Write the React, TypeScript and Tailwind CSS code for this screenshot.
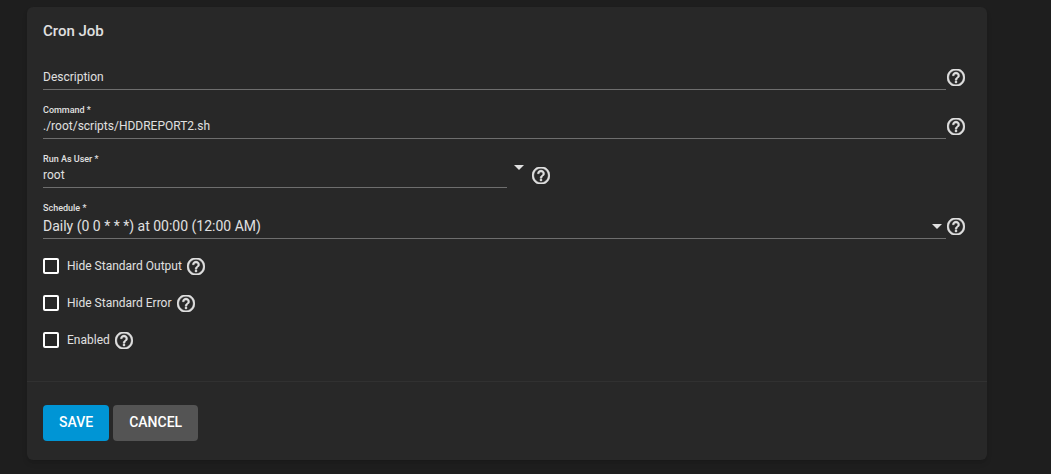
import React, { useState } from 'react';

const HelpIcon: React.FC = () => (
  <svg viewBox="2 2.6 20 18.8" className="w-[18px] h-[17px] fill-[#e0e0e0] stroke-[#e0e0e0]" strokeWidth={0.5} aria-hidden="true">
    <path d="M11 18h2v-2h-2v2zm1-16C6.48 2 2 6.48 2 12s4.48 10 10 10 10-4.48 10-10S17.52 2 12 2zm0 18c-4.41 0-8-3.59-8-8s3.59-8 8-8 8 3.59 8 8-3.59 8-8 8zm0-14c-2.21 0-4 1.79-4 4h2c0-1.1.9-2 2-2s2 .9 2 2c0 2-3 1.75-3 5h2c0-2.25 3-2.5 3-5 0-2.21-1.79-4-4-4z" />
  </svg>
);

const HelpButton: React.FC<{ topic: string }> = ({ topic }) => (
  <button type="button" aria-label={`Help: ${topic}`} className="shrink-0 cursor-pointer">
    <HelpIcon />
  </button>
);

const Caret: React.FC = () => (
  <svg viewBox="0 0 10 5" className="w-[10px] h-[5px] fill-[#e0e0e0]" aria-hidden="true">
    <path d="M0 0h10L5 5z" />
  </svg>
);

const labelClass = 'block h-3 text-[9px] leading-3 font-medium';

const options = [
  { id: 'hide-output', label: 'Hide Standard Output' },
  { id: 'hide-error', label: 'Hide Standard Error' },
  { id: 'enabled', label: 'Enabled' },
];

const App: React.FC = () => {
  const [description, setDescription] = useState('');
  const [command, setCommand] = useState('./root/scripts/HDDREPORT2.sh');

  return (
    <div className="min-h-screen bg-[#1e1e1e] pt-[7px] pb-3 pl-[27px] pr-16 font-[Roboto,sans-serif] text-[#e0e0e0]">
      <form className="rounded-md bg-[#282828] shadow-md" onSubmit={(e) => e.preventDefault()}>
        <div className="pl-4 pr-[22px] pt-3.5 pb-[31px]">
          <h1 className="text-[15px] leading-5 font-medium">Cron Job</h1>

          {/* Description, its label sits in the box until something is typed */}
          <div className="flex items-end gap-px pt-[26px]">
            <div className="relative flex-1 border-b border-[#6e6e6e] pb-0.5">
              <label
                htmlFor="description"
                className={description ? 'absolute -top-3 left-0 text-[9px] leading-3 font-medium' : 'absolute top-0 left-0 text-xs leading-5'}
              >
                Description
              </label>
              <input
                id="description"
                value={description}
                onChange={(e) => setDescription(e.target.value)}
                className="block h-5 w-full bg-transparent text-xs outline-none"
              />
            </div>
            <div className="flex pb-1"><HelpButton topic="Description" /></div>
          </div>

          {/* Command */}
          <div className="flex items-end gap-px pt-3.5">
            <div className="flex-1 border-b border-[#6e6e6e] pb-0.5">
              <label htmlFor="command" className={labelClass}>Command *</label>
              <input
                id="command"
                value={command}
                onChange={(e) => setCommand(e.target.value)}
                className="block h-5 w-full bg-transparent text-xs outline-none"
              />
            </div>
            <div className="flex pb-1"><HelpButton topic="Command" /></div>
          </div>

          {/* Run as user */}
          <div className="flex items-end pt-3.5">
            <div className="w-[calc(50%+3px)] border-b border-[#6e6e6e] pb-0.5 mr-[7px]">
              <label htmlFor="user" className={labelClass}>Run As User *</label>
              <select id="user" className="block h-5 w-full appearance-none bg-transparent text-xs outline-none">
                <option>root</option>
              </select>
            </div>
            <div className="mr-2 pb-[18px]"><Caret /></div>
            <div className="flex pb-1"><HelpButton topic="Run As User" /></div>
          </div>

          {/* Schedule */}
          <div className="flex items-end gap-px pt-3.5">
            <div className="relative flex-1 border-b border-[#6e6e6e] pb-px">
              <label htmlFor="schedule" className={labelClass}>Schedule *</label>
              <select id="schedule" className="block h-[23px] w-full appearance-none bg-transparent text-sm outline-none">
                <option>Daily (0 0 * * *) at 00:00 (12:00 AM)</option>
              </select>
              <div className="pointer-events-none absolute right-1 bottom-[9px]"><Caret /></div>
            </div>
            <div className="flex pb-1"><HelpButton topic="Schedule" /></div>
          </div>

          {/* Options */}
          <div className="flex flex-col gap-[17px] pt-[17px]">
            {options.map((o) => (
              <div key={o.id} className="flex h-5 items-center">
                <input
                  id={o.id}
                  type="checkbox"
                  className="mr-2 size-4 appearance-none rounded-xs border-2 border-white checked:bg-[#0095d5]"
                />
                <label htmlFor={o.id} className="mr-[5px] text-xs">{o.label}</label>
                <HelpButton topic={o.label} />
              </div>
            ))}
          </div>
        </div>

        {/* Actions */}
        <div className="flex gap-1 border-t border-[#313131] px-4 pt-[23px] pb-[19px]">
          <button type="submit" className="h-9 rounded bg-[#0095d5] px-4 pb-0.5 text-sm font-medium text-white">SAVE</button>
          <button type="button" className="h-9 rounded bg-[#545454] px-4 pb-0.5 text-sm font-medium text-white">CANCEL</button>
        </div>
      </form>
    </div>
  );
};

export default App;
